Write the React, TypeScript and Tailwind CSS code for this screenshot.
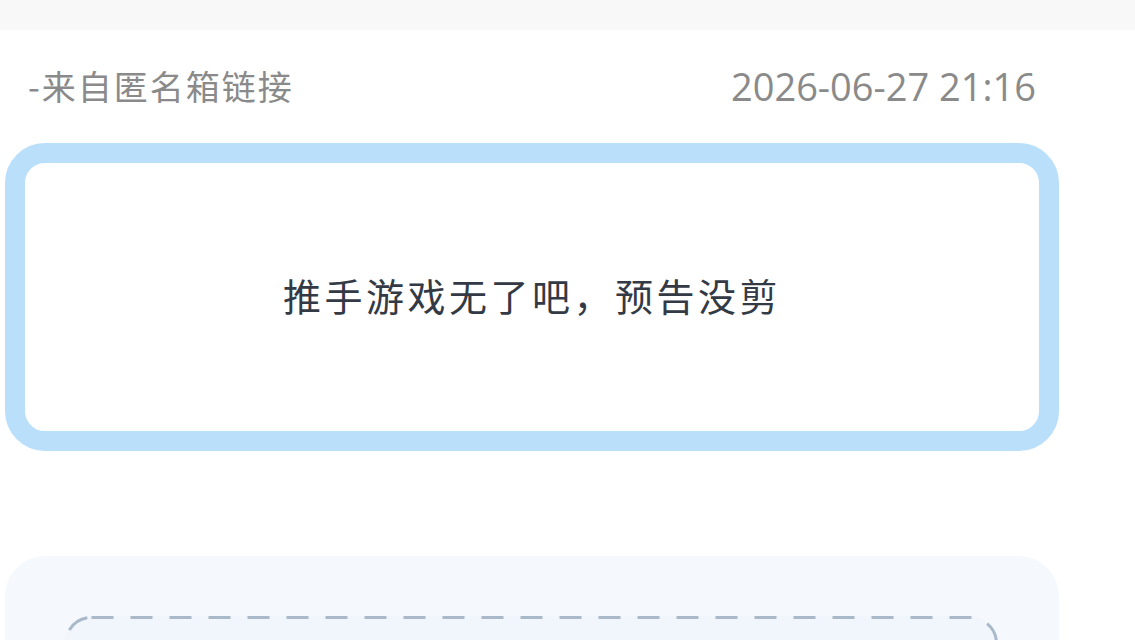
import React from 'react';

const cjk = { fontFamily: '"Noto Sans CJK SC", "Noto Sans", sans-serif' };

const DashedBox: React.FC<{ children?: React.ReactNode }> = ({ children }) => (
  <div className="relative ml-[59px] mr-[61px] h-[200px] rounded-[28px] bg-[#f1f6fc]">
    <svg className="absolute inset-0 w-full h-full" preserveAspectRatio="none">
      <rect
        x="1.5"
        y="1.5"
        width="calc(100% - 3px)"
        height="calc(100% - 3px)"
        rx="26"
        fill="none"
        stroke="#a9b9c9"
        strokeWidth="3"
        strokeDasharray="22 17"
      />
    </svg>
    {children}
  </div>
);

export default function App() {
  return (
    <div className="w-[1135px] h-[640px] overflow-hidden bg-white" style={cjk}>
      <div className="h-[30px] bg-[#f8f8f8]" />

      <div className="flex items-center justify-between pl-[28px] pr-[99px] h-[113px] pb-[2px]">
        <span className="text-[34px] tracking-[2px] text-[#8a8a8a] leading-none">-来自匿名箱链接</span>
        <span
          className="text-[38px] text-[#8a8a8a] leading-none"
          style={{ fontFamily: '"Open Sans", "Liberation Sans", sans-serif' }}
        >
          2026-06-27 21:16
        </span>
      </div>

      <div className="ml-[5px] mr-[76px] h-[308px] rounded-[40px] border-[20px] border-[#b9dffb] bg-white flex items-center justify-center pb-[5px]">
        <p className="text-[38px] tracking-[3.5px] text-[#333a45] leading-none">推手游戏无了吧，预告没剪</p>
      </div>

      <div className="mt-[105px] ml-[5px] mr-[76px] h-[300px] rounded-[40px] bg-[#f5f8fc] pt-[60px]">
        <DashedBox />
      </div>
    </div>
  );
}
